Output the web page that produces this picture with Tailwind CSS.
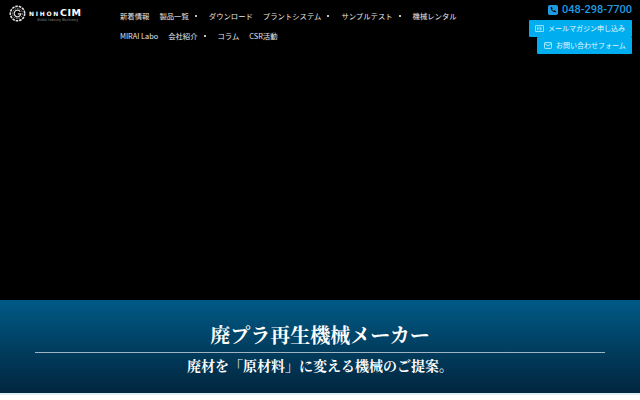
<!DOCTYPE html>
<html lang="ja"><head><meta charset="utf-8"><script src="https://cdn.jsdelivr.net/npm/@tailwindcss/browser@4"></script></head>
<body class="w-[640px] h-[400px] overflow-hidden bg-white font-['Noto_Sans_CJK_JP',sans-serif] text-white">
<div class="flex flex-col">
<header class="h-[300px] bg-black relative flex items-start">
  <div class="w-[120px] pl-[9px] pt-[5px] shrink-0 flex items-start gap-[3px]">
    <svg width="17" height="17" viewBox="0 0 17 17" fill="none" stroke="#e4e4e4" class="shrink-0"><circle cx="8.5" cy="8.5" r="7.2" stroke-width="1.6" stroke-dasharray="2.6 .9"/><circle cx="8.5" cy="8.5" r="5" stroke-width=".6" stroke-dasharray="1.5 1"/><path d="M11.2 6.6A3.3 3.3 0 1 0 11.8 8.8H8.8" stroke-width="1.2"/></svg>
    <div class="flex flex-col items-start font-['DejaVu_Sans',sans-serif] leading-none pt-[4px]">
      <div class="flex items-end font-bold h-[8px] leading-none whitespace-nowrap"><span class="text-[6px] tracking-[1.7px]">NIHON</span><span class="text-[9.5px] tracking-[0.5px]">CIM</span></div>
      <span class="text-[2.8px] text-[#999] mt-[1.5px] ml-[8px] whitespace-nowrap font-['Liberation_Sans',sans-serif] tracking-[0.35px]">Global Industry Machinery</span>
    </div>
  </div>
  <nav class="w-[400px] pt-[6px] text-[7.35px] leading-[20px] text-[#e8e8e8]">
    <div class="flex">
    <a class="mr-[10px]">新着情報</a>
    <a class="mr-[10px] flex items-center">製品一覧<i class="ml-[6px] mr-[2px] w-[2px] h-[2px] rounded-full bg-white"></i></a>
    <a class="mr-[10px]">ダウンロード</a>
    <a class="mr-[10px] flex items-center">プラントシステム<i class="ml-[6px] mr-[2px] w-[2px] h-[2px] rounded-full bg-white"></i></a>
    <a class="mr-[10px] flex items-center">サンプルテスト<i class="ml-[6px] mr-[2px] w-[2px] h-[2px] rounded-full bg-white"></i></a>
    <a>機械レンタル</a>
    </div>
    <div class="flex">
    <a class="mr-[10px]">MIRAI Labo</a>
    <a class="mr-[10px] flex items-center">会社紹介<i class="ml-[6px] mr-[2px] w-[2px] h-[2px] rounded-full bg-white"></i></a>
    <a class="mr-[10px]">コラム</a>
    <a>CSR活動</a>
    </div>
  </nav>
  <div class="absolute top-0 right-[8px] flex flex-col items-end">
    <div class="flex items-center h-[20px] gap-[4px] text-[#1e9be0] font-['Roboto',sans-serif] font-medium text-[11px]">
      <svg width="10" height="10" viewBox="0 0 11 11"><rect width="11" height="11" rx="2" fill="#1e9be0"/><path d="M3 2.5l1.3-.3.8 1.8-.8.7c.4.9 1 1.5 1.9 1.9l.7-.8 1.8.8-.3 1.3c-3 .2-5.6-2.4-5.4-5.4z" fill="#000"/></svg>
      <span>048-298-7700</span>
    </div>
    <a class="w-[103px] h-[17px] bg-[#00aeef] rounded-[1px] text-[7px] leading-none whitespace-nowrap flex items-center pl-[6px] text-[#e6f6ff]">
      <svg width="9" height="7" viewBox="0 0 9 7" class="mr-[4px] shrink-0" fill="none" stroke="#dff" stroke-width=".7"><rect x=".4" y=".4" width="8.2" height="6.2" rx=".6"/><path d="M2 2.2h5M2 3.5h5M2 4.8h5" stroke-dasharray="1 .5"/></svg>メールマガジン申し込み</a>
    <a class="w-[95px] h-[17px] bg-[#00aeef] rounded-[1px] text-[7px] leading-none whitespace-nowrap flex items-center pl-[7px] text-[#e6f6ff]">
      <svg width="8" height="7" viewBox="0 0 8 7" class="mr-[4px] shrink-0" fill="none" stroke="#dff" stroke-width=".8"><rect x=".4" y=".6" width="7.2" height="5.8" rx=".8"/><path d="M.6 1.4L4 4l3.4-2.6"/></svg>お問い合わせフォーム</a>
  </div>
</header>
<section class="h-[93px] bg-gradient-to-b from-[#005a86] to-[#01263f] flex flex-col items-center font-['Noto_Serif_CJK_JP','Liberation_Serif','Noto_Sans_CJK_JP',serif] font-bold">
  <h1 class="text-[20px] leading-[30px] mt-[20px] h-[32px]">廃プラ再生機械メーカー</h1>
  <div class="w-[570px] h-px bg-[#9fb4c2]"></div>
  <p class="text-[14px] leading-[20px] mt-[2px]">廃材を「原材料」に変える機械のご提案。</p>
</section>
<div class="h-[2px] bg-[#dfeef4]"></div>
</div>
</body></html>
